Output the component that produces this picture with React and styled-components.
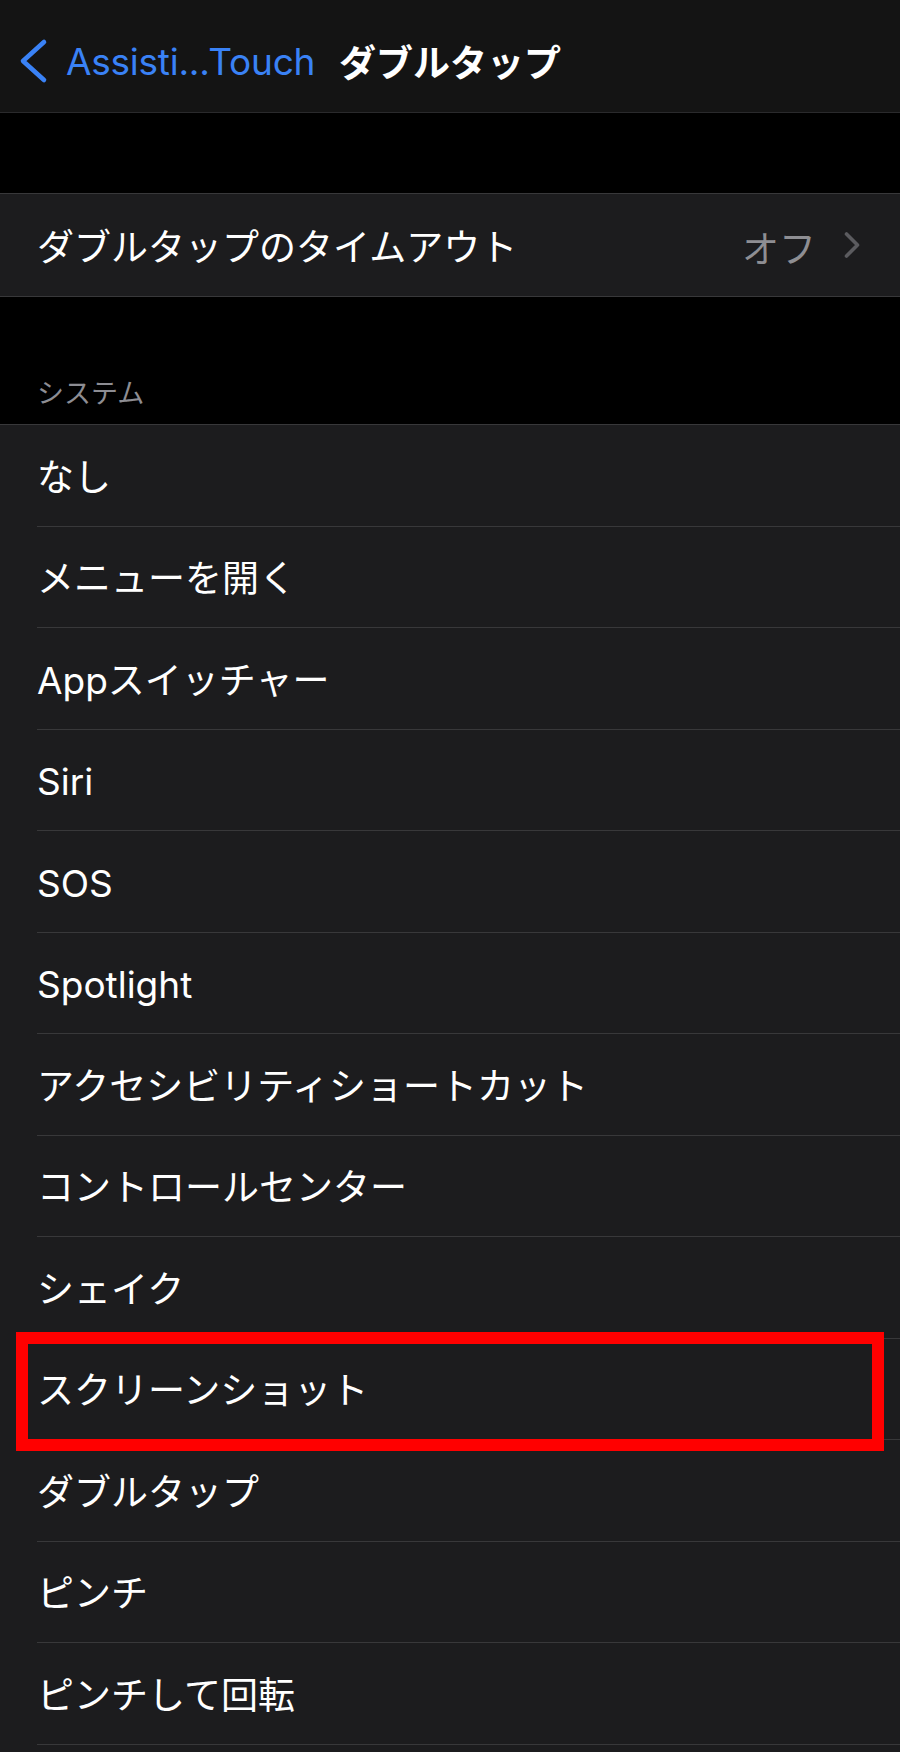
import React from "react";
import styled, { createGlobalStyle } from "styled-components";

const GlobalStyle = createGlobalStyle`
  html, body {
    margin: 0;
    padding: 0;
    background: #000;
  }
  body {
    font-family: "Inter", "Noto Sans CJK JP", sans-serif;
    -webkit-font-smoothing: antialiased;
  }
  * { box-sizing: border-box; }
`;

const Page = styled.div`
  width: 900px;
  min-height: 1752px;
  background: #000;
  overflow: hidden;
`;

const NavBar = styled.header`
  height: 113px;
  padding-top: 10px;
  background: #141414;
  border-bottom: 1px solid #2a2a2c;
  display: grid;
  grid-template-columns: 1fr auto 1fr;
  align-items: center;
`;

const BackButton = styled.div`
  display: flex;
  align-items: center;
  padding-left: 18px;
  color: #3a82f6;
  font-family: "Inter", "Noto Sans CJK JP", sans-serif;
  font-size: 37px;
  letter-spacing: -0.25px;
  white-space: nowrap;
`;

const BackLabel = styled.span`
  margin-left: 18px;
`;

const Title = styled.h1`
  margin: 0;
  color: #fff;
  font-family: "Noto Sans CJK JP", sans-serif;
  font-weight: 700;
  font-size: 37px;
  line-height: 1;
  white-space: nowrap;
`;

const Spacer = styled.div`
  height: ${(p) => p.$h}px;
`;

const Group = styled.section`
  background: #1c1c1e;
  border-top: 1px solid #38383a;
  border-bottom: ${(p) => (p.$open ? "none" : "1px solid #38383a")};
  padding-bottom: ${(p) => (p.$open ? "40px" : "0")};
`;

const SectionHeader = styled.div`
  height: ${(p) => p.$h}px;
  display: flex;
  align-items: flex-end;
  padding: 0 0 18px 37px;
  color: #8d8d93;
  font-family: "Noto Sans CJK JP", sans-serif;
  font-size: 27px;
  line-height: 28px;
`;

const Row = styled.div`
  position: relative;
  height: ${(p) => p.$h}px;
  padding-left: 37px;
  display: flex;
`;

const RowInner = styled.div`
  flex: 1;
  display: flex;
  align-items: center;
  padding-right: 39px;
  border-bottom: ${(p) => (p.$sep ? "1px solid #38383a" : "none")};
`;

const Label = styled.span`
  flex: 1;
  color: #fff;
  font-family: "Inter", "Noto Sans CJK JP", sans-serif;
  font-size: 37px;
  line-height: 1;
  padding-top: 4px;
  white-space: nowrap;
`;

const Value = styled.span`
  color: #8e8e93;
  font-family: "Noto Sans CJK JP", sans-serif;
  font-size: 37px;
  line-height: 1;
  padding-top: 4px;
  margin-right: 27px;
`;

const Highlight = styled.div`
  position: absolute;
  left: 15.5px;
  right: 16px;
  top: -6.5px;
  bottom: -11px;
  border: 12px solid #ff0000;
  pointer-events: none;
`;

const BackChevron = () => (
  <svg width="30" height="48" viewBox="0 0 30 48" fill="none">
    <path
      d="M26 5 L5 24 L26 43"
      stroke="#3a82f6"
      strokeWidth="4.6"
      strokeLinecap="round"
      strokeLinejoin="round"
    />
  </svg>
);

const DisclosureChevron = () => (
  <svg width="18" height="28" viewBox="0 0 18 28" fill="none">
    <path
      d="M3.5 3 L14.5 14 L3.5 25"
      stroke="#5b5b5f"
      strokeWidth="3.6"
      strokeLinecap="round"
      strokeLinejoin="round"
    />
  </svg>
);

const items = [
  "なし",
  "メニューを開く",
  "Appスイッチャー",
  "Siri",
  "SOS",
  "Spotlight",
  "アクセシビリティショートカット",
  "コントロールセンター",
  "シェイク",
  "スクリーンショット",
  "ダブルタップ",
  "ピンチ",
  "ピンチして回転",
];

export default function App() {
  return (
    <>
      <GlobalStyle />
      <Page>
        <NavBar>
          <BackButton>
            <BackChevron />
            <BackLabel>Assisti...Touch</BackLabel>
          </BackButton>
          <Title>ダブルタップ</Title>
          <div />
        </NavBar>
        <Spacer $h={80} />
        <Group>
          <Row $h={102}>
            <RowInner>
              <Label>ダブルタップのタイムアウト</Label>
              <Value>オフ</Value>
              <DisclosureChevron />
            </RowInner>
          </Row>
        </Group>
        <SectionHeader $h={127}>システム</SectionHeader>
        <Group $open>
          {items.map((label) => (
            <Row key={label} $h={101.5}>
              <RowInner $sep>
                <Label>{label}</Label>
              </RowInner>
              {label === "スクリーンショット" && <Highlight />}
            </Row>
          ))}
        </Group>
      </Page>
    </>
  );
}
